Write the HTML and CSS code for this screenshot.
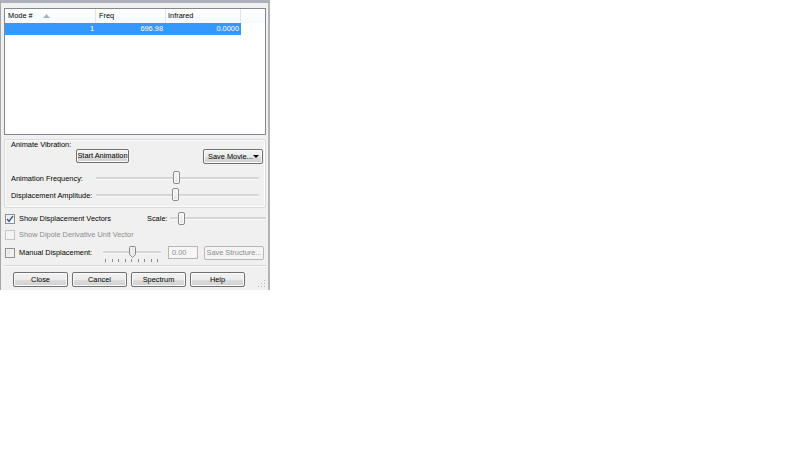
FILE: index.html
```html
<!DOCTYPE html>
<html lang="en">
<head>
<meta charset="UTF-8">
<title>Vibrations</title>
<link rel="stylesheet" href="styles.css">
</head>
<body>
<div class="dialog">
    <div class="modes">
        <div class="modes-head">
            <div class="col col-mode">Mode #
                <svg class="sort" width="7" height="4" viewBox="0 0 7 4"><path d="M0 4 L3.5 0 L7 4 Z" fill="#a9b4c2"/></svg>
            </div>
            <div class="col col-freq">Freq</div>
            <div class="col col-ir">Infrared</div>
            <div class="col col-fill"></div>
        </div>
        <div class="modes-row selected">
            <div class="cell col-mode">1</div>
            <div class="cell col-freq">696.98</div>
            <div class="cell col-ir">0.0000</div>
        </div>
    </div>

    <div class="group">
        <div class="group-title">Animate Vibration:</div>
        <div class="group-buttons">
            <button type="button" class="btn btn-start">Start Animation</button>
            <button type="button" class="btn btn-movie">Save Movie...<span class="drop"></span></button>
        </div>
        <div class="slider-row">
            <span class="slider-label">Animation Frequency:</span>
            <div class="slider slider-wide">
                <div class="track"></div>
                <div class="thumb" style="left: 77px"></div>
            </div>
        </div>
        <div class="slider-row second">
            <span class="slider-label">Displacement Amplitude:</span>
            <div class="slider slider-wide">
                <div class="track"></div>
                <div class="thumb" style="left: 76px"></div>
            </div>
        </div>
    </div>

    <div class="options">
        <div class="opt-row">
            <label class="check-label wide">
                <span class="check checked">
                    <svg width="8" height="8" viewBox="0 0 8 8"><path d="M1 4 L3 6.3 L7 1" fill="none" stroke="#3b5a9a" stroke-width="1.4"/></svg>
                </span>
                Show Displacement Vectors
            </label>
            <span class="scale-label">Scale:</span>
            <div class="slider slider-scale">
                <div class="track"></div>
                <div class="thumb" style="left: 8px"></div>
            </div>
        </div>
        <div class="opt-row second">
            <label class="check-label disabled">
                <span class="check"></span>
                Show Dipole Derivative Unit Vector
            </label>
        </div>
        <div class="opt-row third">
            <label class="check-label narrow">
                <span class="check"></span>
                Manual Displacement:
            </label>
            <div class="slider slider-manual">
                <div class="track"></div>
                <svg class="pointer" style="left: 26px" width="7" height="12" viewBox="0 0 7 12">
                    <path d="M0.5 1.5 Q0.5 0.5 1.5 0.5 H5.5 Q6.5 0.5 6.5 1.5 V8.5 L3.5 11.5 L0.5 8.5 Z" fill="#ececec" stroke="#8a8a8a"/>
                </svg>
                <div class="ticks">
                    <i></i><i></i><i></i><i></i><i></i><i></i><i></i><i></i><i></i>
                </div>
            </div>
            <div class="value-box">0.00</div>
            <button type="button" class="btn btn-structure" disabled>Save Structure...</button>
        </div>
    </div>

    <div class="separator"></div>

    <div class="footer">
        <button type="button" class="btn btn-foot">Close</button>
        <button type="button" class="btn btn-foot">Cancel</button>
        <button type="button" class="btn btn-foot">Spectrum</button>
        <button type="button" class="btn btn-foot">Help</button>
        <svg class="grip" width="8" height="8" viewBox="0 0 8 8">
            <rect x="6" y="0" width="1" height="1" fill="#b8b8b8"/>
            <rect x="3" y="3" width="1" height="1" fill="#b8b8b8"/>
            <rect x="6" y="3" width="1" height="1" fill="#b8b8b8"/>
            <rect x="0" y="6" width="1" height="1" fill="#b8b8b8"/>
            <rect x="3" y="6" width="1" height="1" fill="#b8b8b8"/>
            <rect x="6" y="6" width="1" height="1" fill="#b8b8b8"/>
        </svg>
    </div>
</div>
</body>
</html>
```

FILE: styles.css
```css
html, body {
    margin: 0;
    padding: 0;
    background: #fff;
}

body {
    font-family: "Liberation Sans", Arial, sans-serif;
    font-size: 7.4px;
    line-height: 9px;
    color: #000;
}

.dialog {
    width: 270px;
    height: 290px;
    box-sizing: border-box;
    background: #f0f0f0;
    border-top: 3px solid #aab1ba;
    border-left: 1px solid #a5a5a5;
    border-right: 2px solid #b4b4b4;
    display: flex;
    flex-direction: column;
}

/* list of modes */
.modes {
    margin: 5px 0 0 3px;
    width: 262px;
    height: 127px;
    box-sizing: border-box;
    border: 1px solid #828790;
    background: #fff;
}

.modes-head {
    display: flex;
    height: 14px;
    background: linear-gradient(#ffffff, #f7f8f9);
}

.modes-head .col {
    box-sizing: border-box;
    border-right: 1px solid #e3e5e8;
    line-height: 14px;
    padding-left: 3px;
    position: relative;
}

.col-mode { width: 91px; }
.col-freq { width: 70px; }
.col-ir { width: 75px; }
.col-fill { flex: 1; border-right: none !important; }

.modes-head .col-ir { padding-left: 2px; }

.sort {
    position: absolute;
    left: 38px;
    top: 5px;
}

.modes-row {
    display: flex;
    height: 12px;
    width: 236px;
}

.modes-row.selected {
    background: #3399ff;
    color: #fff;
}

.modes-row .cell {
    box-sizing: border-box;
    text-align: right;
    line-height: 12px;
    padding-right: 2px;
}

.modes-row .col-freq { padding-right: 3px; }

/* animate group */
.group {
    margin: 4px 0 0 3px;
    width: 262px;
    height: 69px;
    box-sizing: border-box;
    border: 1px solid #d8dcdf;
    border-radius: 2px;
    box-shadow: inset 0 0 0 1px #fbfbfb;
}

.group-title {
    padding-left: 6px;
    height: 9px;
}

.group-buttons {
    display: flex;
    align-items: flex-start;
    height: 15px;
}

.btn {
    font: inherit;
    color: #000;
    padding: 0;
    box-sizing: border-box;
    border: 1px solid #707070;
    border-radius: 2px;
    background: linear-gradient(#f2f2f2 0%, #ebebeb 50%, #dddddd 51%, #cfcfcf 100%);
    box-shadow: inset 0 0 0 1px #fbfbfb;
    line-height: 12px;
    text-align: center;
}

.btn-start {
    margin-left: 71px;
    width: 53px;
    height: 14px;
}

.btn-movie {
    margin-left: auto;
    margin-right: 2px;
    width: 60px;
    height: 15px;
    line-height: 13px;
    text-align: left;
    padding-left: 4px;
    position: relative;
}

.drop {
    position: absolute;
    right: 3px;
    top: 5px;
    border-left: 3px solid transparent;
    border-right: 3px solid transparent;
    border-top: 3px solid #000;
}

.slider-row {
    display: flex;
    align-items: center;
    height: 14px;
    margin-top: 7px;
    padding-left: 6px;
}

.slider-row.second { margin-top: 3px; }

.slider-label { width: 85px; }

.slider {
    position: relative;
    height: 14px;
}

.slider-wide { width: 163px; }

.track {
    position: absolute;
    left: 0;
    right: 0;
    top: 6px;
    height: 2px;
    background: #d4d6d8;
    border-bottom: 1px solid #f8f8f8;
}

.thumb {
    position: absolute;
    top: 0;
    width: 7px;
    height: 13px;
    box-sizing: border-box;
    border: 1px solid #8a8a8a;
    border-radius: 2px;
    background: linear-gradient(#f6f6f6, #e4e4e4);
    box-shadow: inset 0 0 0 1px #fdfdfd;
}

/* options below the group */
.options {
    margin: 3px 0 0 4px;
}

.opt-row {
    display: flex;
    align-items: flex-start;
    height: 15px;
}

.opt-row.second { margin-top: 1px; }

.opt-row.third {
    margin-top: 3px;
    height: 18px;
}

.check-label {
    display: flex;
    align-items: center;
    height: 15px;
}

.check-label.wide { width: 142px; }
.check-label.narrow { width: 98px; }

.check {
    width: 10px;
    height: 10px;
    box-sizing: border-box;
    border: 1px solid #8e8f8f;
    background: linear-gradient(135deg, #dcdcdc, #fbfbfb);
    box-shadow: inset 0 0 0 1px #f4f4f4;
    margin-right: 4px;
    display: flex;
    align-items: center;
    justify-content: center;
}

.check.checked {
    background: linear-gradient(135deg, #e2e6ee, #fdfdfd);
}

.check-label.disabled {
    color: #8d8d8d;
}

.check-label.disabled .check {
    border-color: #c5c5c5;
    background: #f4f4f4;
    box-shadow: none;
}

.scale-label {
    width: 23px;
    line-height: 15px;
}

.slider-scale {
    width: 96px;
    height: 15px;
}

.slider-scale .track { top: 6px; }
.slider-scale .thumb { top: 1px; }

.slider-manual {
    width: 58px;
    height: 18px;
}

.slider-manual .track { top: 6px; }

.pointer {
    position: absolute;
    top: 1px;
}

.ticks {
    position: absolute;
    left: 2px;
    top: 14px;
    width: 53px;
    height: 3px;
    display: flex;
    justify-content: space-between;
}

.ticks i {
    width: 1px;
    height: 3px;
    background: #8a8a8a;
}

.value-box {
    margin: 1px 0 0 7px;
    width: 30px;
    height: 13px;
    box-sizing: border-box;
    border: 1px solid #b6b6b6;
    background: #f6f6f6;
    color: #8d8d8d;
    line-height: 11px;
    padding-left: 3px;
}

.btn-structure {
    margin: 1px 0 0 6px;
    width: 60px;
    height: 14px;
    border-color: #b5b8bb;
    background: #f4f4f4;
    box-shadow: none;
    color: #8d8d8d;
}

.separator {
    margin: 2px 0 0 3px;
    width: 262px;
    height: 1px;
    background: #d5d5d5;
    border-bottom: 1px solid #fcfcfc;
}

.footer {
    display: flex;
    align-items: flex-start;
    gap: 4px;
    margin: 5px 0 0 12px;
    height: 16px;
}

.btn-foot {
    width: 55px;
    height: 15px;
}

.grip {
    margin-left: auto;
    margin-right: 2px;
    margin-top: 8px;
}
```
